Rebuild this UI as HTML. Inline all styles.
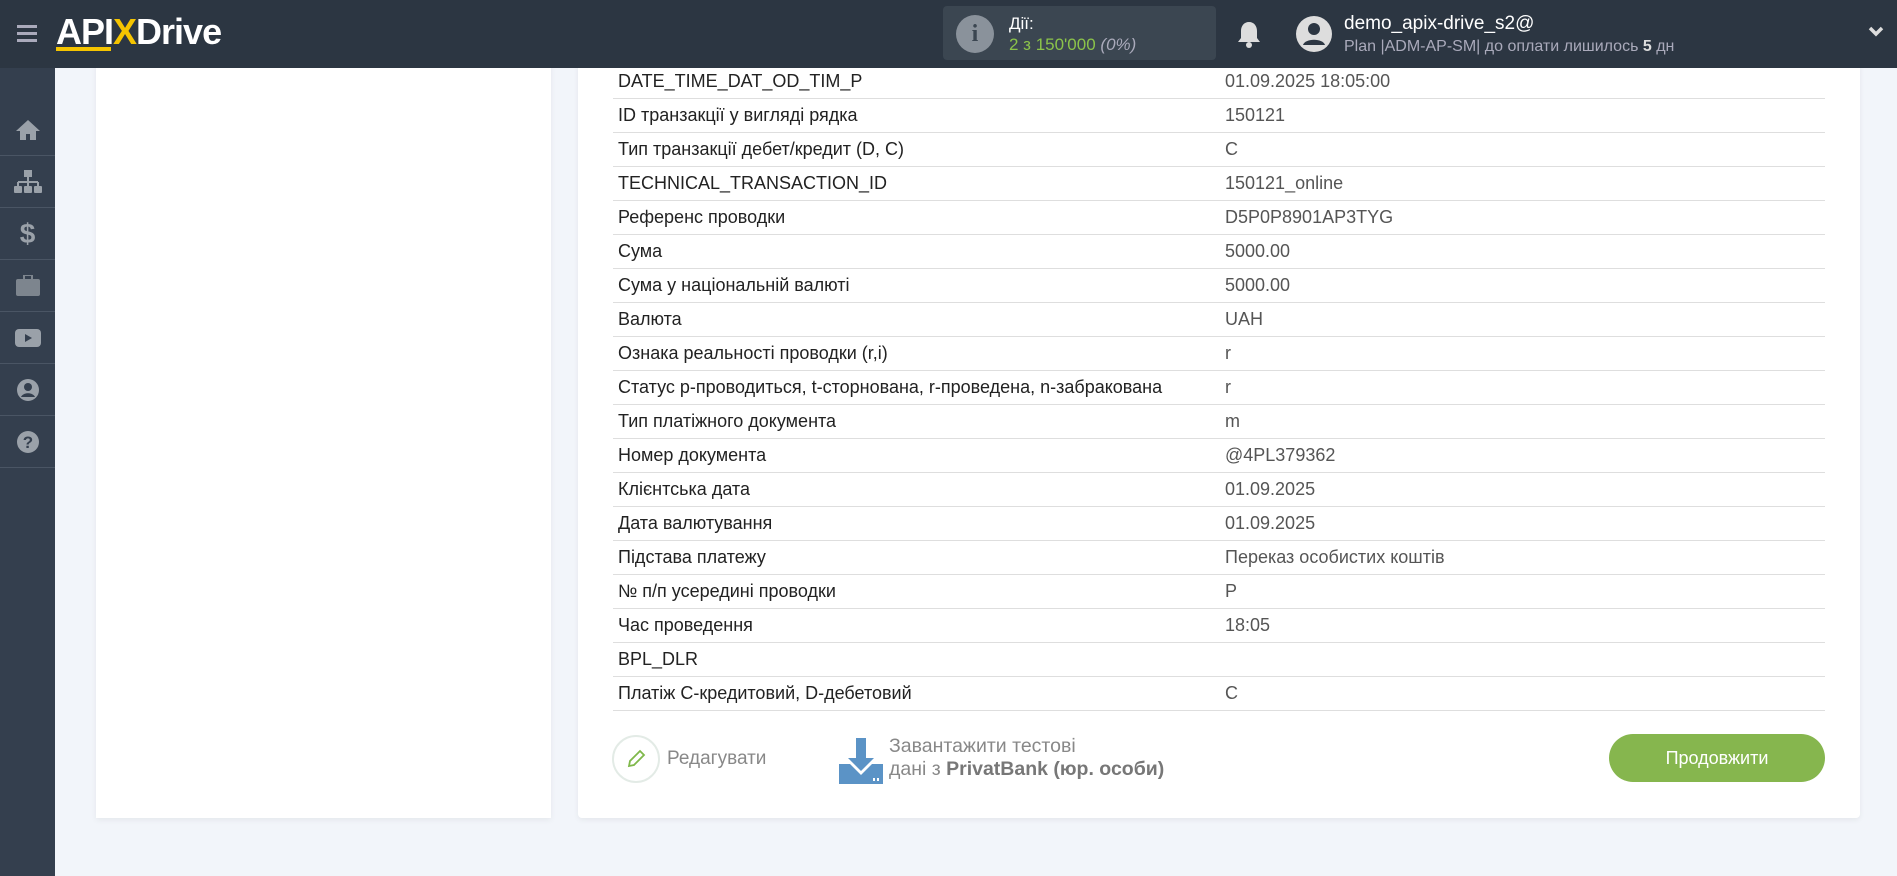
<!DOCTYPE html>
<html><head><meta charset="utf-8"><style>
*{margin:0;padding:0;box-sizing:border-box}
body{width:1897px;height:876px;background:#f2f5fa;font-family:"Liberation Sans",sans-serif;position:relative;overflow:hidden}
.hdr{position:absolute;left:0;top:0;width:1897px;height:68px;background:#2c3642;z-index:5}
.side{position:absolute;left:0;top:68px;width:55px;height:808px;background:#343f4e}
.si{height:52px;border-bottom:1px solid #4a5564;display:flex;align-items:center;justify-content:center}
.panel{position:absolute;background:#fff;box-shadow:0 2px 6px rgba(0,0,0,.06)}
.row{position:absolute;left:613px;width:1212px;height:34px;border-bottom:1px solid #dedede;font-size:18px;color:#222;line-height:33px;padding-left:5px}
.row span{position:absolute;left:612px;color:#555}
</style></head><body>
<div class="hdr">
 <div style="position:absolute;left:17px;top:25px;width:20px;height:3px;background:#aab;box-shadow:0 7px 0 #aab,0 14px 0 #aab"></div>
 <div style="position:absolute;left:56px;top:11px;font-size:36px;font-weight:bold;color:#fff;letter-spacing:-1px">API<span style="color:#f5c400">X</span>Drive</div>
 <div style="position:absolute;left:56px;top:47px;width:55px;height:4px;background:#f5c400"></div>
 <div style="position:absolute;left:943px;top:6px;width:273px;height:54px;background:#3b4651;border-radius:4px">
  <div style="position:absolute;left:13px;top:9px;width:38px;height:38px;border-radius:50%;background:#8a929b;color:#3b4651;font-weight:bold;font-size:24px;text-align:center;line-height:38px;font-family:'Liberation Serif',serif">i</div>
  <div style="position:absolute;left:66px;top:8px;color:#fff;font-size:17px">Дії:</div>
  <div style="position:absolute;left:66px;top:29px;color:#8bc34a;font-size:17px">2 з 150'000 <i style="color:#aab">(0%)</i></div>
 </div>
 <svg style="position:absolute;left:1237px;top:20px" width="24" height="28" viewBox="0 0 24 28"><path d="M12 2c-5 0-8 4-8 9v7l-3 4h22l-3-4v-7c0-5-3-9-8-9z" fill="#ddd"/><circle cx="12" cy="25" r="3" fill="#ddd"/></svg>
 <svg style="position:absolute;left:1295px;top:15px" width="38" height="38" viewBox="0 0 38 38"><circle cx="19" cy="19" r="18" fill="#ddd"/><circle cx="19" cy="14" r="6" fill="#2c3642"/><path d="M8 30c2-7 20-7 22 0" fill="#2c3642"/></svg>
 <div style="position:absolute;left:1344px;top:13px;color:#fff;font-size:19px">demo_apix-drive_s2@</div>
 <div style="position:absolute;left:1344px;top:38px;color:#aab;font-size:16px">Plan |ADM-AP-SM| до оплати лишилось <b style="color:#ddd">5</b> дн</div>
 <svg style="position:absolute;left:1868px;top:26px" width="16" height="12" viewBox="0 0 16 12"><path d="M2 2l6 6 6-6" stroke="#ddd" stroke-width="3.5" fill="none"/></svg>
</div>
<div class="side">
 <div class="si" style="height:88px;padding-top:36px"><svg width="26" height="22" viewBox="0 0 26 22"><path d="M13 1L1 12h4v9h6v-6h4v6h6v-9h4z" fill="#9aa1a9"/></svg></div>
 <div class="si"><svg width="28" height="24" viewBox="0 0 28 24"><rect x="10" y="0" width="8" height="7" fill="#9aa1a9"/><path d="M14 7v5M4 12h20M4 12v4M14 12v4M24 12v4" stroke="#9aa1a9" stroke-width="2"/><rect x="0" y="16" width="8" height="7" rx="1" fill="#9aa1a9"/><rect x="10" y="16" width="8" height="7" rx="1" fill="#9aa1a9"/><rect x="20" y="16" width="8" height="7" rx="1" fill="#9aa1a9"/></svg></div>
 <div class="si" style="color:#9aa1a9;font-size:28px;font-weight:bold">$</div>
 <div class="si"><svg width="24" height="21" viewBox="0 0 24 21"><rect x="0" y="4" width="24" height="17" rx="2" fill="#7d858e"/><rect x="8" y="0" width="8" height="5" fill="none" stroke="#7d858e" stroke-width="2"/></svg></div>
 <div class="si"><svg width="26" height="18" viewBox="0 0 26 18"><rect width="26" height="18" rx="4" fill="#9aa1a9"/><path d="M10 5l7 4-7 4z" fill="#343f4e"/></svg></div>
 <div class="si"><svg width="24" height="24" viewBox="0 0 24 24"><circle cx="12" cy="12" r="11" fill="#9aa1a9"/><circle cx="12" cy="9" r="4" fill="#343f4e"/><path d="M5 19c2-5 12-5 14 0" fill="#343f4e"/></svg></div>
 <div class="si"><svg width="24" height="24" viewBox="0 0 24 24"><circle cx="12" cy="12" r="11" fill="#9aa1a9"/><text x="12" y="18" text-anchor="middle" font-size="17" font-weight="bold" fill="#343f4e" font-family="Liberation Sans">?</text></svg></div>
</div>
<div class="panel" style="left:96px;top:60px;width:455px;height:758px"></div>
<div class="panel" style="left:578px;top:60px;width:1282px;height:758px;border-radius:4px"></div>
<div class="row" style="top:65px">DATE_TIME_DAT_OD_TIM_P<span>01.09.2025 18:05:00</span></div>
<div class="row" style="top:99px">ID транзакції у вигляді рядка<span>150121</span></div>
<div class="row" style="top:133px">Тип транзакції дебет/кредит (D, C)<span>C</span></div>
<div class="row" style="top:167px">TECHNICAL_TRANSACTION_ID<span>150121_online</span></div>
<div class="row" style="top:201px">Референс проводки<span>D5P0P8901AP3TYG</span></div>
<div class="row" style="top:235px">Сума<span>5000.00</span></div>
<div class="row" style="top:269px">Сума у національній валюті<span>5000.00</span></div>
<div class="row" style="top:303px">Валюта<span>UAH</span></div>
<div class="row" style="top:337px">Ознака реальності проводки (r,i)<span>r</span></div>
<div class="row" style="top:371px">Статус p-проводиться, t-сторнована, r-проведена, n-забракована<span>r</span></div>
<div class="row" style="top:405px">Тип платіжного документа<span>m</span></div>
<div class="row" style="top:439px">Номер документа<span>@4PL379362</span></div>
<div class="row" style="top:473px">Клієнтська дата<span>01.09.2025</span></div>
<div class="row" style="top:507px">Дата валютування<span>01.09.2025</span></div>
<div class="row" style="top:541px">Підстава платежу<span>Переказ особистих коштів</span></div>
<div class="row" style="top:575px">№ п/п усередині проводки<span>P</span></div>
<div class="row" style="top:609px">Час проведення<span>18:05</span></div>
<div class="row" style="top:643px">BPL_DLR<span></span></div>
<div class="row" style="top:677px">Платіж C-кредитовий, D-дебетовий<span>C</span></div>
<div style="position:absolute;left:612px;top:735px;width:48px;height:48px;border-radius:50%;border:2px solid #e3ebe6"></div>
<svg style="position:absolute;left:626px;top:749px" width="20" height="20" viewBox="0 0 20 20"><path d="M3 17l1-5 10-10 4 4-10 10z" fill="none" stroke="#7fb84a" stroke-width="1.8"/></svg>
<div style="position:absolute;left:667px;top:748px;font-size:19px;color:#888">Редагувати</div>
<svg style="position:absolute;left:839px;top:738px" width="44" height="46" viewBox="0 0 44 46"><path d="M17 0h10v20h8l-13 13-13-13h8z" fill="#5b93c6"/><path d="M0 26h11l11 11 11-11h11v20h-44z" fill="#5b93c6"/><rect x="34" y="40" width="2" height="3" fill="#fff"/><rect x="38" y="40" width="2" height="3" fill="#fff"/></svg>
<div style="position:absolute;left:889px;top:735px;font-size:19.5px;color:#888;line-height:23px">Завантажити тестові<br>дані з <b style="color:#777">PrivatBank (юр. особи)</b></div>
<div style="position:absolute;left:1609px;top:734px;width:216px;height:48px;border-radius:24px;background:#86b64e;color:#fff;font-size:18px;text-align:center;line-height:48px">Продовжити</div>
</body></html>
